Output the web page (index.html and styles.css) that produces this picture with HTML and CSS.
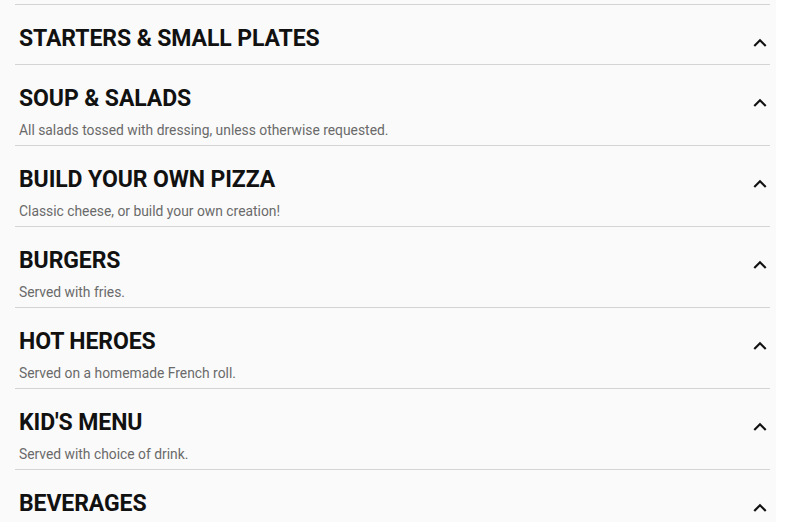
FILE: index.html
```html
<!DOCTYPE html>
<html lang="en">
<head>
<meta charset="utf-8">
<title>Menu</title>
<link rel="stylesheet" href="styles.css">
</head>
<body>
<main class="page">
  <div class="menu">
    <section class="cat">
      <div class="cat-head">
        <div class="cat-text">
          <h2 class="cat-title">STARTERS &amp; SMALL PLATES</h2>
        </div>
        <svg class="chev" viewBox="0 0 24 24"><path d="M12 8l-6 6 1.41 1.41L12 10.83l4.59 4.58L18 14z"/></svg>
      </div>
    </section>
    <section class="cat">
      <div class="cat-head">
        <div class="cat-text">
          <h2 class="cat-title">SOUP &amp; SALADS</h2>
          <p class="cat-desc">All salads tossed with dressing, unless otherwise requested.</p>
        </div>
        <svg class="chev" viewBox="0 0 24 24"><path d="M12 8l-6 6 1.41 1.41L12 10.83l4.59 4.58L18 14z"/></svg>
      </div>
    </section>
    <section class="cat">
      <div class="cat-head">
        <div class="cat-text">
          <h2 class="cat-title">BUILD YOUR OWN PIZZA</h2>
          <p class="cat-desc">Classic cheese, or build your own creation!</p>
        </div>
        <svg class="chev" viewBox="0 0 24 24"><path d="M12 8l-6 6 1.41 1.41L12 10.83l4.59 4.58L18 14z"/></svg>
      </div>
    </section>
    <section class="cat">
      <div class="cat-head">
        <div class="cat-text">
          <h2 class="cat-title">BURGERS</h2>
          <p class="cat-desc">Served with fries.</p>
        </div>
        <svg class="chev" viewBox="0 0 24 24"><path d="M12 8l-6 6 1.41 1.41L12 10.83l4.59 4.58L18 14z"/></svg>
      </div>
    </section>
    <section class="cat">
      <div class="cat-head">
        <div class="cat-text">
          <h2 class="cat-title">HOT HEROES</h2>
          <p class="cat-desc">Served on a homemade French roll.</p>
        </div>
        <svg class="chev" viewBox="0 0 24 24"><path d="M12 8l-6 6 1.41 1.41L12 10.83l4.59 4.58L18 14z"/></svg>
      </div>
    </section>
    <section class="cat">
      <div class="cat-head">
        <div class="cat-text">
          <h2 class="cat-title">KID'S MENU</h2>
          <p class="cat-desc">Served with choice of drink.</p>
        </div>
        <svg class="chev" viewBox="0 0 24 24"><path d="M12 8l-6 6 1.41 1.41L12 10.83l4.59 4.58L18 14z"/></svg>
      </div>
    </section>
    <section class="cat">
      <div class="cat-head">
        <div class="cat-text">
          <h2 class="cat-title">BEVERAGES</h2>
        </div>
        <svg class="chev" viewBox="0 0 24 24"><path d="M12 8l-6 6 1.41 1.41L12 10.83l4.59 4.58L18 14z"/></svg>
      </div>
    </section>
  </div>
</main>
</body>
</html>
```
FILE: styles.css
```css
html, body {
  margin: 0;
  padding: 0;
  background: #ffffff;
  height: 100%;
  overflow: hidden;
}

.page {
  width: 776px;
  min-height: 100%;
  background: #fafafa;
  padding-top: 4px;
  box-sizing: border-box;
  font-family: Roboto, "Liberation Sans", Arial, sans-serif;
}

.menu {
  width: 755px;
  margin-left: 15px;
  border-top: 1px solid #d4d4d4;
}

.cat {
  border-bottom: 1px solid #d4d4d4;
}

.cat-head {
  display: flex;
  align-items: flex-start;
  padding: 18px 0 5px 4px;
}

.cat-text {
  flex: 1;
  min-width: 0;
}

.cat-title {
  margin: 0 0 4px;
  font-size: 23px;
  line-height: 32px;
  letter-spacing: -0.1px;
  font-weight: 700;
  color: #111111;
}

.cat-desc {
  margin: 0;
  padding-top: 1px;
  font-size: 13.85px;
  line-height: 20px;
  color: #6a6a6a;
}

.chev {
  width: 26px;
  height: 26px;
  margin-top: 7px;
  margin-right: -3px;
  flex: none;
  fill: #111111;
}
```
